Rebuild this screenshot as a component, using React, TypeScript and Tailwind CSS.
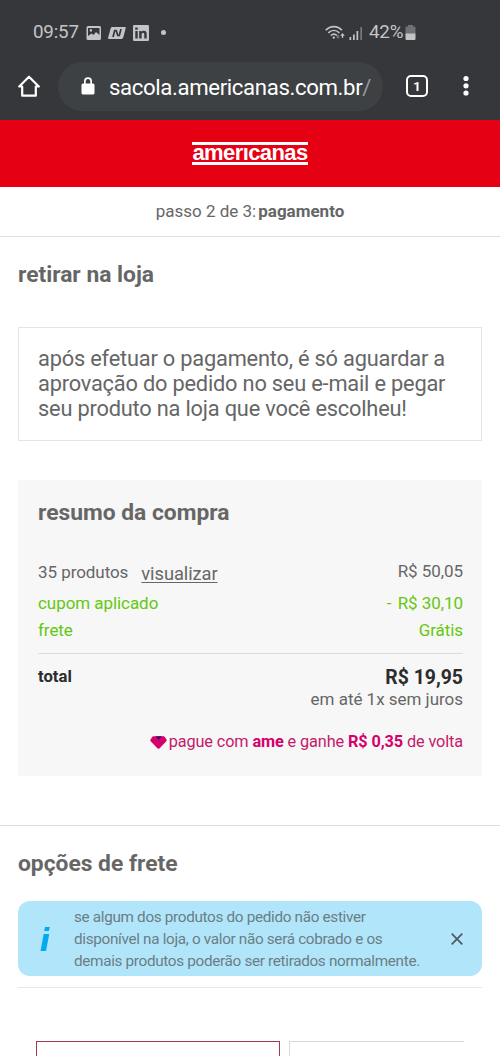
import type { ReactNode } from "react";

function StatusBar() {
  return (
    <div className="flex h-[54px] items-center pt-[11px] pl-[33px] text-[18.8px] leading-none tracking-[-0.2px] text-[#c3c4c6]">
      <span className="w-[46px]">09:57</span>
      <svg className="ml-[7px] h-[16px] w-[16px]" viewBox="0 0 16 16">
        <path
          fillRule="evenodd"
          fill="currentColor"
          d="M2 1h11.500a1.500 1.500 0 0 1 1.500 1.500v11a1.500 1.500 0 0 1-1.500 1.500H2A1.500 1.500 0 0 1 .5 13.500v-11A1.500 1.500 0 0 1 2 1zM2 3v8l3.500-2.500L7.500 10l2.500-3 3.500 3V3zM3.800 4.200h2.200v2.200H3.800z"
        />
      </svg>
      <svg className="ml-[6px] h-[12px] w-[18px]" viewBox="0 0 18 12">
        <path fill="currentColor" d="M4.500 0h12.300c.8 0 1.100.5.9 1.200l-2.400 9.100c-.3 1.100-1 1.700-2 1.700H.9c-.7 0-1-.5-.8-1.200L2.600 1.500C2.900.5 3.500 0 4.500 0z" />
        <path fill="none" stroke="#36373b" strokeWidth="1.700" d="M5 10l1.700-6.500h1.500l1.600 5h1.500L13 2" />
      </svg>
      <svg className="ml-[7px] h-[16px] w-[16px]" viewBox="0 0 16 16">
        <rect width="16" height="16" rx="1.200" fill="currentColor" />
        <path
          fill="#36373b"
          d="M2.300 6h2.400v7.500H2.300zM2.200 2.500h2.500v2.300H2.200zM6.200 6h2.300v1c.4-.7 1.200-1.200 2.300-1.200 2.200 0 2.900 1.400 2.900 3.500v4.200h-2.400V9.700c0-1-.2-1.900-1.200-1.900-1.200 0-1.500.8-1.500 1.900v3.800H6.200z"
        />
      </svg>
      <span className="ml-[12px] h-[5px] w-[5px] rounded-full bg-[#c3c4c6]" />
      <svg className="ml-[159px] h-[16px] w-[20px]" viewBox="0 0 20 16">
        <g fill="none" stroke="currentColor" strokeWidth="1.600">
          <path d="M.7 5.200c4.700-4.800 11.600-4.800 16.300 0" />
          <path d="M3.300 7.900c3.300-3.200 7.800-3.200 11.100 0" />
          <path d="M5.800 10.500c1.800-1.700 4.400-1.700 6.200 0" />
        </g>
        <circle cx="8.800" cy="12.600" r="1.200" fill="currentColor" />
        <path d="M17.500 8l2.300 2.700h-1.600V13h-1.400v-2.300h-1.600z" fill="currentColor" />
        <path d="M13 14l-2-2.500h1.400V9.500h1.200v2H15z" fill="#77787b" />
      </svg>
      <svg className="ml-[4px] h-[16px] w-[14px]" viewBox="0 0 14 16">
        <path fill="currentColor" d="M.5 12h1.700v3H.5zM4 9.500h1.700V15H4zM7.500 6h1.700v9H7.500z" />
        <path fill="#77787b" d="M11.300 2H13v13h-1.700z" />
      </svg>
      <span className="ml-[6px] w-[34px]">42%</span>
      <svg className="ml-[2px] h-[15px] w-[11px]" viewBox="0 0 11 15">
        <path fill="#707174" d="M3 0h5v1.500h1.500a1 1 0 0 1 1 1V9H.5V2.500a1 1 0 0 1 1-1H3z" />
        <path fill="currentColor" d="M.5 8.500h10V14a1 1 0 0 1-1 1h-8a1 1 0 0 1-1-1z" />
      </svg>
    </div>
  );
}

function BrowserBar() {
  return (
    <div className="flex h-[64px] items-center text-white">
      <svg className="ml-[18px] h-[22px] w-[22px]" viewBox="0 0 22 22">
        <path
          fill="none"
          stroke="currentColor"
          strokeWidth="2.200"
          strokeLinejoin="round"
          d="M1.200 11.500L11 1.700l9.800 9.800h-3v9.200H4.200v-9.200z"
        />
      </svg>
      <div className="ml-[18px] flex h-[49px] w-[325px] items-center rounded-full bg-[#3e4144] pl-[23px]">
        <svg className="h-[18px] w-[14px]" viewBox="0 0 14 18">
          <path
            fill="currentColor"
            fillRule="evenodd"
            d="M3 6.500V4.300a4 4 0 0 1 8 0v2.200h1a1.500 1.500 0 0 1 1.500 1.500v8a1.500 1.500 0 0 1-1.500 1.500H2A1.500 1.500 0 0 1 .5 16V8A1.500 1.500 0 0 1 2 6.500zm1.700 0h4.600V4.300a2.300 2.300 0 0 0-4.600 0z"
          />
        </svg>
        <span className="mt-[2px] ml-[14px] text-[22.2px] leading-none tracking-[-0.37px] whitespace-nowrap">
          sacola.americanas.com.br<span className="text-[#96989b]">/</span>
        </span>
      </div>
      <div className="ml-[23px] flex h-[22px] w-[22px] items-center justify-center rounded-[5px] border-2 border-white text-[13px] leading-none font-bold">
        1
      </div>
      <svg className="ml-[35px] h-[22px] w-[6px]" viewBox="0 0 6 22" fill="currentColor">
        <circle cx="3" cy="3.500" r="2.600" />
        <circle cx="3" cy="10.800" r="2.600" />
        <circle cx="3" cy="18" r="2.600" />
      </svg>
    </div>
  );
}

function Logo() {
  return (
    <div className="flex h-[23px] w-[116px] justify-center border-y-[3px] border-white font-['Liberation_Sans',sans-serif] text-[22px] leading-[15px] font-bold tracking-[-0.6px] text-white">
      amerıcanas
    </div>
  );
}

type SummaryRowProps = {
  label: ReactNode;
  value: ReactNode;
  className: string;
};

function SummaryRow({ label, value, className }: SummaryRowProps) {
  return (
    <div className={`flex items-center justify-between text-[17px] tracking-[-0.06px] ${className}`}>
      <span>{label}</span>
      <span>{value}</span>
    </div>
  );
}

function Summary() {
  return (
    <section className="mx-[18px] mt-[39px] h-[296px] bg-[#f7f7f7] pt-[18px] pr-[19px] pl-5">
      <h2 className="text-[22.8px] leading-[30px] font-bold">resumo da compra</h2>
      <SummaryRow
        className="mt-[28px] h-[31px]"
        value="R$ 50,05"
        label={
          <>
            35 produtos
            <a className="relative top-[2px] ml-[13px] text-[18.3px] underline decoration-1 underline-offset-2">
              visualizar
            </a>
          </>
        }
      />
      <SummaryRow
        className="mt-[3px] h-[27px] text-[#64c80f]"
        label="cupom aplicado"
        value={
          <>
            <span className="mr-[2px]">-</span> R$ 30,10
          </>
        }
      />
      <SummaryRow className="h-[27px] text-[#64c80f]" label="frete" value="Grátis" />
      <div className="mt-[9px] flex justify-between border-t border-[#dcdcdc] pt-[12px]">
        <span className="text-[16.7px] leading-[22px] font-bold text-[#2c2c2c]">total</span>
        <div className="text-right">
          <p className="text-[19.4px] leading-[24px] font-bold text-[#2c2c2c]">R$ 19,95</p>
          <p className="text-[17px] leading-[19px] tracking-[-0.02px]">em até 1x sem juros</p>
        </div>
      </div>
      <div className="mt-[23px] flex items-center justify-end text-[16.300px] leading-[20px] tracking-[-0.12px] text-[#c5196b]">
        <svg className="mr-[2px] h-[13px] w-[17px]" viewBox="0 0 17 13">
          <path fill="#d5006c" d="M4 .2h9c1 0 1.500.3 2 1l1.300 2c.6.900.5 1.500-.2 2.300l-6 6.300c-1.200 1.200-2 1.200-3.200 0l-6-6.300C.2 4.700.1 4.100.7 3.200L2 1.200c.5-.7 1-1 2-1z" />
          <path fill="#37125f" d="M5.500.2h6.500L8.800 3.700z" />
        </svg>
        <p>
          pague com <b className="text-[#d5006c]">ame</b> e ganhe <b className="text-[#d5006c]">R$ 0,35</b> de volta
        </p>
      </div>
    </section>
  );
}

function FreightNotice() {
  return (
    <div className="mt-[22px] flex h-[75px] items-center rounded-[12px] bg-[#b1e6fa] pl-[22px] text-[#6b7d86]">
      <svg className="h-[26px] w-[10px]" viewBox="0 0 10 26">
        <path fill="#00aaf0" d="M5 1h4.800l-.9 4H4.200zM3.700 8h5.500L6 25H.5z" />
      </svg>
      <p className="ml-[24px] w-[370px] text-[15.300px] leading-[22px] tracking-[-0.33px]">
        se algum dos produtos do pedido não estiver
        <br />
        disponível na loja, o valor não será cobrado e os
        <br />
        demais produtos poderão ser retirados normalmente.
      </p>
      <svg className="ml-[7px] h-[12px] w-[12px]" viewBox="0 0 12 12">
        <path d="M.7.7l10.600 10.600M11.300.7L.7 11.300" stroke="#4f5d64" strokeWidth="1.800" />
      </svg>
    </div>
  );
}

export default function App() {
  return (
    <div className="h-[1056px] w-[500px] overflow-hidden bg-white font-[Roboto,sans-serif] text-[#666]">
      <div className="h-[120px] bg-[#36373b]">
        <StatusBar />
        <BrowserBar />
      </div>
      <header className="flex h-[67px] items-center justify-center bg-[#e60014]">
        <Logo />
      </header>
      <p className="flex h-[50px] items-center justify-center gap-[2px] border-b border-[#dedede] text-[17px]">
        passo 2 de 3: <b>pagamento</b>
      </p>
      <main>
        <h2 className="mt-[23px] ml-[18px] text-[22.8px] leading-[30px] font-bold">retirar na loja</h2>
        <p className="mx-[18px] mt-[37px] h-[114px] border border-[#e4e4e4] px-[19px] pt-[18px] text-[21.8px] leading-[25px] tracking-[-0.2px] whitespace-nowrap">
          após efetuar o pagamento, é só aguardar a
          <br />
          aprovação do pedido no seu e-mail e pegar
          <br />
          seu produto na loja que você escolheu!
        </p>
        <Summary />
        <section className="mt-[49px] border-t border-[#dedede] px-[18px] pt-[23px]">
          <h2 className="text-[22.8px] leading-[30px] font-bold">opções de frete</h2>
          <FreightNotice />
          <div className="mt-[11px] border-t border-[#e3e8ec]" />
          <div className="mt-[53px] flex h-[40px] gap-[9px] overflow-hidden pr-[18px] pl-[18px]">
            <div className="w-[244px] shrink-0 border border-[#a8364c]" />
            <div className="h-full grow border-t border-l border-[#d8d8d8]" />
          </div>
        </section>
      </main>
    </div>
  );
}
